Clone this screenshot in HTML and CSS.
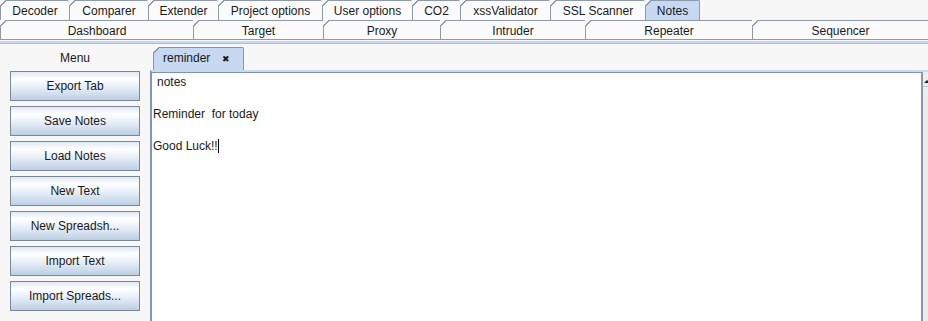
FILE: index.html
```html
<!DOCTYPE html>
<html lang="en">
<head>
  <meta charset="UTF-8" />
  <title>Notes</title>
  <link rel="stylesheet" href="styles.css">
</head>
<body>
  <div class="tabs top">
    <div class="tab">Decoder</div>
    <div class="tab">Comparer</div>
    <div class="tab">Extender</div>
    <div class="tab">Project options</div>
    <div class="tab">User options</div>
    <div class="tab">CO2</div>
    <div class="tab">xssValidator</div>
    <div class="tab">SSL Scanner</div>
    <div class="tab active">Notes</div>
  </div>
  <div class="tabs second">
    <div class="tab">Dashboard</div>
    <div class="tab">Target</div>
    <div class="tab">Proxy</div>
    <div class="tab">Intruder</div>
    <div class="tab">Repeater</div>
    <div class="tab">Sequencer</div>
  </div>
  <div class="band"></div>

  <div class="main">
    <div class="menu">
      <div class="menu-title">Menu</div>
      <button class="btn">Export Tab</button>
      <button class="btn">Save Notes</button>
      <button class="btn">Load Notes</button>
      <button class="btn">New Text</button>
      <button class="btn">New Spreadsh...</button>
      <button class="btn">Import Text</button>
      <button class="btn">Import Spreads...</button>
    </div>

    <div class="notes">
      <div class="note-tabs">
        <div class="note-tab">reminder <span class="close">&#x2716;</span></div>
      </div>
      <div class="editor">
        <div class="text">
          <p class="first">notes</p>
          <p>Reminder&nbsp; for today</p>
          <p>Good Luck!!<span class="caret"></span></p>
        </div>
        <div class="scroll">
          <div class="scroll-btn"><div class="arrow"></div></div>
        </div>
      </div>
    </div>
  </div>
</body>
</html>
```

FILE: styles.css
```css
* {
  box-sizing: border-box;
}

body {
  margin: 0;
  font-family: "Liberation Sans", Arial, sans-serif;
  font-size: 12px;
  color: #1a1a1a;
  background: #f7f7f7;
  height: 321px;
  overflow: hidden;
  display: flex;
  flex-direction: column;
}

/* main tab rows */
.tabs {
  display: flex;
  height: 20px;
}

.tab {
  position: relative;
  height: 20px;
  line-height: 20px;
  border: 1px solid #8d9aab;
  border-bottom: none;
  border-right: none;
  background: #fbfbfb;
  text-align: center;
  white-space: nowrap;
}

.tab::before {
  content: "";
  position: absolute;
  left: -1px;
  top: -1px;
  width: 6px;
  height: 6px;
  background: linear-gradient(135deg, #f7f7f7 0, #f7f7f7 45%, #8d9aab 45%, #8d9aab 60%, transparent 60%);
}

.top .tab {
  padding: 0 9px;
  border-top-right-radius: 2px;
}

.top .tab:nth-child(1) { width: 69px; }
.top .tab:nth-child(2) { width: 79px; }
.top .tab:nth-child(3) { width: 70px; }
.top .tab:nth-child(4) { width: 104px; }
.top .tab:nth-child(5) { width: 90px; }
.top .tab:nth-child(6) { width: 48px; }
.top .tab:nth-child(7) { width: 90px; }
.top .tab:nth-child(8) { width: 95px; }
.top .tab:nth-child(9) { width: 55px; border-right: 1px solid #8d9aab; }

.top .tab.active {
  background: #c6d9f0;
}

.second .tab {
  border-bottom: 1px solid #8d9aab;
}

.second .tab:nth-child(1) { width: 193px; }
.second .tab:nth-child(2) { width: 130px; }
.second .tab:nth-child(3) { width: 117px; }
.second .tab:nth-child(4) { width: 145px; }
.second .tab:nth-child(5) { width: 167px; }
.second .tab:nth-child(6) { flex: 1; }

.band {
  height: 3px;
  margin-top: 1px;
  background: #c6d9f0;
  border-bottom: 1px solid #a9bfd9;
}

/* content */
.main {
  flex: 1;
  display: flex;
}

.menu {
  width: 150px;
  padding: 0 10px;
  display: flex;
  flex-direction: column;
  gap: 5px;
}

.menu-title {
  text-align: center;
  height: 16px;
  line-height: 16px;
  margin-top: 6px;
}

.btn {
  height: 30px;
  width: 130px;
  font-family: inherit;
  font-size: 12px;
  color: #1a1a1a;
  border: 1px solid #7a8796;
  background: linear-gradient(to bottom, #dfe8f3 0%, #ffffff 25%, #e7eef7 55%, #bccfe4 100%);
  padding: 0;
}

.notes {
  flex: 1;
  display: flex;
  flex-direction: column;
  padding-top: 3px;
}

.note-tabs {
  height: 23px;
  padding-left: 3px;
  display: flex;
}

.note-tab {
  position: relative;
  width: 91px;
  height: 23px;
  line-height: 21px;
  padding-left: 9px;
  background: #c6d9f0;
  border: 1px solid #8096b5;
  border-bottom: none;
  border-top-right-radius: 2px;
}

.note-tab::before {
  content: "";
  position: absolute;
  left: -1px;
  top: -1px;
  width: 6px;
  height: 6px;
  background: linear-gradient(135deg, #f7f7f7 0, #f7f7f7 45%, #8096b5 45%, #8096b5 60%, transparent 60%);
}

.close {
  font-size: 9px;
  margin-left: 8px;
}

.editor {
  flex: 1;
  display: flex;
  border-top: 2px solid #c6d9f0;
  border-left: 2px solid #8096b5;
  background: #ffffff;
  box-shadow: inset 0 1px 0 #7d93b3;
}

.text {
  flex: 1;
  padding-top: 3px;
}

.text p {
  margin: 0 0 18px 1px;
  line-height: 14px;
}

.text p.first {
  margin-left: 5px;
}

.caret {
  display: inline-block;
  width: 1px;
  height: 14px;
  background: #000;
  vertical-align: -3px;
}

.scroll {
  width: 7px;
  background: #eeeeee;
  border-left: 2px solid #8a98aa;
  padding-top: 1px;
}

.scroll-btn {
  height: 14px;
  border-bottom: 1px solid #b8c6d8;
  padding-top: 7px;
}

.arrow {
  width: 0;
  height: 0;
  margin-left: 1px;
  border-left: 3px solid transparent;
  border-right: 3px solid transparent;
  border-bottom: 3px solid #222;
}
```
